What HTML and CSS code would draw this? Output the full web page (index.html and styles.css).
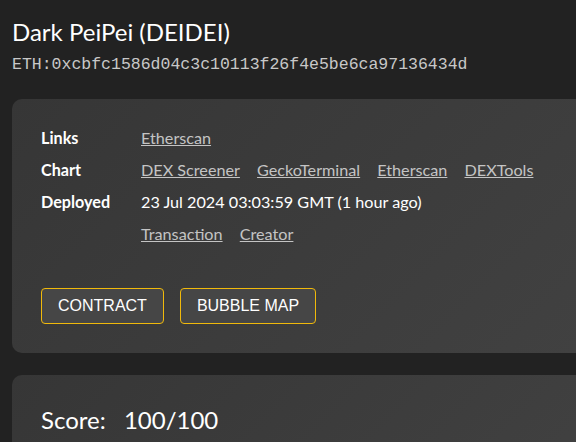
FILE: index.html
```html
<!DOCTYPE html>
<html lang="en">
<head>
    <meta charset="UTF-8">
    <meta name="viewport" content="width=device-width, initial-scale=1.0">
    <title>Dark PeiPei (DEIDEI)</title>
    <link rel="stylesheet" href="styles.css">
</head>
<body>
    <div class="page">
        <h1 class="token-name">Dark PeiPei (DEIDEI)</h1>
        <div class="token-address">ETH:0xcbfc1586d04c3c10113f26f4e5be6ca97136434d</div>

        <div class="card info-card">
            <div class="info-grid">
                <div class="info-label">Links</div>
                <div class="info-value"><a href="#">Etherscan</a></div>

                <div class="info-label">Chart</div>
                <div class="info-value">
                    <a href="#">DEX Screener</a>
                    <a href="#">GeckoTerminal</a>
                    <a href="#">Etherscan</a>
                    <a href="#">DEXTools</a>
                </div>

                <div class="info-label">Deployed</div>
                <div class="info-value">23 Jul 2024 03:03:59 GMT (1 hour ago)</div>

                <div class="info-label"></div>
                <div class="info-value">
                    <a href="#">Transaction</a>
                    <a href="#">Creator</a>
                </div>
            </div>

            <div class="actions">
                <button class="outline-btn">CONTRACT</button>
                <button class="outline-btn">BUBBLE MAP</button>
            </div>
        </div>

        <div class="card score-card">
            <span class="score-label">Score:</span>
            <span class="score-value">100/100</span>
        </div>
    </div>
</body>
</html>
```

FILE: styles.css
```css
html, body {
    margin: 0;
    padding: 0;
    background: #222222;
    overflow: hidden;
}

body {
    font-family: 'Lato', 'Noto Sans', sans-serif;
    color: #ffffff;
}

.page {
    padding: 18px 0 0 12px;
    width: 640px;
}

.token-name {
    font-size: 24px;
    font-weight: 400;
    margin: 0;
    line-height: 28px;
}

.token-address {
    font-family: 'Liberation Mono', monospace;
    font-size: 16.5px;
    color: #c8c8c8;
    margin-top: 9px;
    line-height: 20px;
}

.card {
    background: linear-gradient(135deg, #363636, #424242);
    border-radius: 10px;
}

.info-card {
    margin-top: 24px;
    padding: 28px 29px 29px;
}

.info-grid {
    display: grid;
    grid-template-columns: 100px auto;
    row-gap: 10px;
    font-size: 16.2px;
    line-height: 22px;
}

.info-label {
    font-weight: 700;
}

.info-value a {
    color: #c4c4c4;
    text-decoration: underline;
    margin-right: 13px;
}

.actions {
    display: flex;
    gap: 16px;
    margin-top: 43px;
}

.outline-btn {
    font-family: 'Liberation Sans', Arial, sans-serif;
    font-size: 16px;
    color: #ffffff;
    background: #464646;
    border: 1px solid #f0b90b;
    border-radius: 4px;
    padding: 0 16px;
    height: 36px;
}

.score-card {
    margin-top: 22px;
    padding: 30px 29px 40px;
    font-size: 24px;
}

.score-value {
    margin-left: 12px;
}
```
